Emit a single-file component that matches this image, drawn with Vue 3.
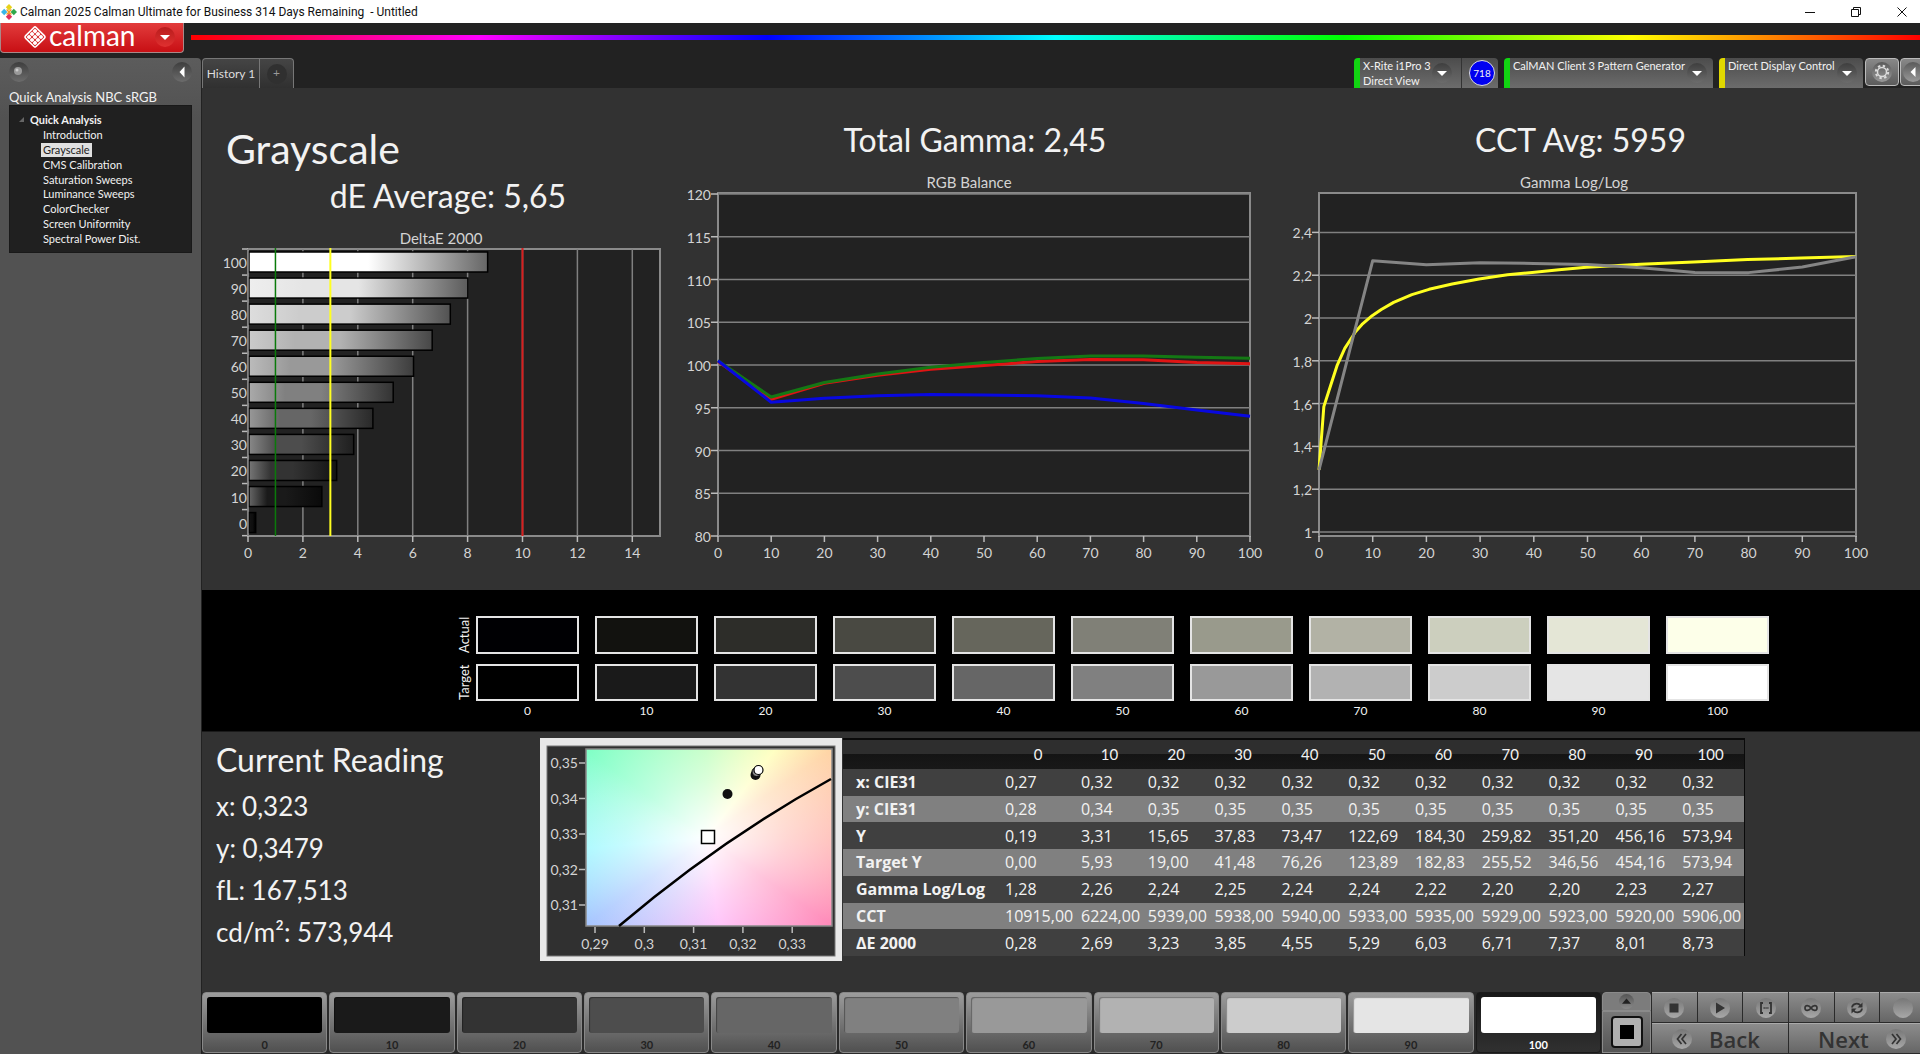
<script setup>
const treeItems = [
  'Introduction', 'Grayscale', 'CMS Calibration', 'Saturation Sweeps',
  'Luminance Sweeps', 'ColorChecker', 'Screen Uniformity', 'Spectral Power Dist.'
]

const levels = [
  { level: 0, gray: 0, actual: '#000003' },
  { level: 10, gray: 26, actual: '#12120f' },
  { level: 20, gray: 51, actual: '#2d2d29' },
  { level: 30, gray: 77, actual: '#494942' },
  { level: 40, gray: 102, actual: '#66665c' },
  { level: 50, gray: 128, actual: '#808077' },
  { level: 60, gray: 153, actual: '#999a8c' },
  { level: 70, gray: 178, actual: '#b2b2a5' },
  { level: 80, gray: 204, actual: '#cccfbe' },
  { level: 90, gray: 229, actual: '#e4e6d6' },
  { level: 100, gray: 255, actual: '#fdffe9' }
]
const rgb = (v) => `rgb(${Math.round(v)}, ${Math.round(v)}, ${Math.round(v)})`

const rows = [
  ['x: CIE31', '0,27', '0,32', '0,32', '0,32', '0,32', '0,32', '0,32', '0,32', '0,32', '0,32', '0,32'],
  ['y: CIE31', '0,28', '0,34', '0,35', '0,35', '0,35', '0,35', '0,35', '0,35', '0,35', '0,35', '0,35'],
  ['Y', '0,19', '3,31', '15,65', '37,83', '73,47', '122,69', '184,30', '259,82', '351,20', '456,16', '573,94'],
  ['Target Y', '0,00', '5,93', '19,00', '41,48', '76,26', '123,89', '182,83', '255,52', '346,56', '454,16', '573,94'],
  ['Gamma Log/Log', '1,28', '2,26', '2,24', '2,25', '2,24', '2,24', '2,22', '2,20', '2,20', '2,23', '2,27'],
  ['CCT', '10915,00', '6224,00', '5939,00', '5938,00', '5940,00', '5933,00', '5935,00', '5929,00', '5923,00', '5920,00', '5906,00'],
  ['ΔE 2000', '0,28', '2,69', '3,23', '3,85', '4,55', '5,29', '6,03', '6,71', '7,37', '8,01', '8,73']
]

/* DeltaE bar chart */
const deltas = [8.73, 8.01, 7.37, 6.71, 6.03, 5.29, 4.55, 3.85, 3.23, 2.69, 0.28]
const dx = (v) => 46 + v * 27.45
const dy = (i) => 35 + i * 26.06
const bars = deltas.map((v, i) => {
  const { level, gray } = levels[10 - i]
  return {
    level,
    width: v * 27.45,
    y: dy(i) + 3,
    start: rgb(level ? gray + (255 - gray) * 0.33 : 34),
    mid: rgb(level ? gray : 16),
    end: rgb(gray * 0.4)
  }
})

/* RGB balance line chart */
const rx = (v) => 38 + v * 5.32
const ry = (v) => 378 - (v - 80) * 8.55
const line = (vals, fx, fy) => vals.map((v, i) => `${fx(i * 10)},${fy(v)}`).join(' ')
const balance = [
  { name: 'red', points: line([100.4, 96, 97.85, 98.8, 99.5, 99.95, 100.4, 100.65, 100.6, 100.3, 100.15], rx, ry) },
  { name: 'green', points: line([100.5, 96.25, 97.95, 98.95, 99.75, 100.3, 100.75, 101.05, 101.05, 100.9, 100.8], rx, ry) },
  { name: 'blue', points: line([100.5, 95.65, 96.1, 96.4, 96.55, 96.5, 96.4, 96.15, 95.5, 94.75, 94], rx, ry) }
]

/* Gamma line chart */
const gx = (v) => 49 + v * 5.37
const gy = (v) => 374 - (v - 1) * 214
const gammaTicks = [2.4, 2.2, 2, 1.8, 1.6, 1.4, 1.2, 1]
const measured = line([1.29, 2.268, 2.249, 2.258, 2.255, 2.25, 2.235, 2.213, 2.212, 2.238, 2.286], gx, gy)
const target = [
  [0, 1.29], [0.9, 1.586], [2.3, 1.695], [3.4, 1.78], [4.8, 1.858], [6.3, 1.916], [6.8, 1.936],
  [8, 1.97], [9.9, 2.011], [11.6, 2.04], [13.9, 2.073], [17.3, 2.109], [20.5, 2.134], [24.8, 2.159],
  [29.8, 2.182], [35.1, 2.202], [39.7, 2.213], [44.7, 2.226], [49.8, 2.237], [59.9, 2.251],
  [69.8, 2.262], [79.8, 2.273], [89.8, 2.28], [100, 2.287]
].map(([x, y]) => `${gx(x)},${gy(y)}`).join(' ')

const comma = (v) => String(v).replace('.', ',')
const tens = levels.map((l) => l.level)
</script>

<template>
  <div class="app">
    <header class="titlebar">
      <svg class="app-icon" viewBox="0 0 16 16" aria-hidden="true">
        <path d="M8 0l3.2 3.2L8 6.4 4.8 3.2z" fill="#e8d21a" />
        <path d="M3.2 4.8L6.4 8l-3.2 3.2L0 8z" fill="#38b6e8" />
        <path d="M12.8 4.8L16 8l-3.2 3.2L9.6 8z" fill="#2fa84a" />
        <path d="M8 9.6l3.2 3.2L8 16l-3.2-3.2z" fill="#e0305a" />
        <path d="M5.600 5.600l2.400 2.400-2.400 2.400M10.400 5.600L8 8l2.400 2.400" fill="none" stroke="#f29a2c" stroke-width="1.400" />
      </svg>
      <span class="app-title">Calman 2025 Calman Ultimate for Business 314 Days Remaining&nbsp; - Untitled</span>
      <div class="window-buttons">
        <button aria-label="Minimize"><svg viewBox="0 0 12 12"><path d="M1 6.500h10" /></svg></button>
        <button aria-label="Restore"><svg viewBox="0 0 12 12"><path d="M1.500 3.500h7v7h-7zM3.500 3.500v-2h7v7h-2" /></svg></button>
        <button aria-label="Close"><svg viewBox="0 0 12 12"><path d="M1.500 1.500l9 9M10.500 1.500l-9 9" /></svg></button>
      </div>
    </header>

    <div class="brandbar">
      <button class="brand">
        <svg class="brand-mark" viewBox="0 0 24 24" aria-hidden="true">
          <g transform="rotate(45 12 12)">
            <rect x="4.500" y="4.500" width="15" height="15" rx="1.500" fill="none" stroke="#fff" stroke-width="1.600" />
            <template v-for="r in 3" :key="r">
              <rect v-for="c in 3" :key="c" :x="1.800 + c * 4.200" :y="1.800 + r * 4.200" width="3.600" height="3.600" rx="1" fill="#fff" />
            </template>
          </g>
        </svg>
        <span class="brand-name">calman</span>
        <span class="knob red"><svg viewBox="0 0 20 20"><path d="M5 8h10l-5 5z" fill="#fff" /></svg></span>
      </button>
      <div class="rainbow"></div>
    </div>

    <div class="body">
      <aside class="sidebar">
        <div class="side-top">
          <button class="knob" aria-label="Options"><svg viewBox="0 0 20 20"><circle cx="9" cy="9" r="4" fill="#999" /><circle cx="8" cy="8" r="1.500" fill="#ccc" /></svg></button>
          <button class="knob" aria-label="Collapse"><svg viewBox="0 0 20 20"><path d="M12.500 4.500v11L7.500 10z" fill="#fff" /></svg></button>
        </div>
        <h2 class="workflow">Quick Analysis NBC sRGB</h2>
        <nav class="tree">
          <div class="tree-root">
            <svg viewBox="0 0 8 8"><path d="M6 2v5H1z" fill="#666" /></svg>
            <span>Quick Analysis</span>
          </div>
          <ul>
            <li v-for="item in treeItems" :key="item">
              <a href="#" :class="{ selected: item === 'Grayscale' }">{{ item }}</a>
            </li>
          </ul>
        </nav>
      </aside>

      <main class="workspace">
        <div class="toolbar">
          <div class="tabs">
            <button class="tab">History 1</button>
            <button class="tab add" aria-label="Add history"><span>+</span></button>
          </div>
          <div class="devices">
            <div class="device meter">
              <button class="device-main">
                <span class="device-text">X-Rite i1Pro 3<br>Direct View</span>
                <span class="knob"><svg viewBox="0 0 20 20"><path d="M5 8h10l-5 5z" fill="#fff" /></svg></span>
              </button>
              <span class="badge-cell"><span class="badge">718</span></span>
            </div>
            <div class="device pattern">
              <button class="device-main">
                <span class="device-text">CalMAN Client 3 Pattern Generator</span>
                <span class="knob"><svg viewBox="0 0 20 20"><path d="M5 8h10l-5 5z" fill="#fff" /></svg></span>
              </button>
            </div>
            <div class="device display">
              <button class="device-main">
                <span class="device-text">Direct Display Control</span>
                <span class="knob"><svg viewBox="0 0 20 20"><path d="M5 8h10l-5 5z" fill="#fff" /></svg></span>
              </button>
            </div>
            <button class="square" aria-label="Settings">
              <span class="knob light"><svg viewBox="0 0 20 20"><circle cx="10" cy="10" r="4.500" fill="none" stroke="#ddd" stroke-width="1.500" /><circle cx="10" cy="10" r="6.200" fill="none" stroke="#ddd" stroke-width="2" stroke-dasharray="2.400 2.470" /></svg></span>
            </button>
            <button class="square" aria-label="Collapse toolbar">
              <span class="knob light"><svg viewBox="0 0 20 20"><path d="M12.500 5v10l-5-5z" fill="#fff" /></svg></span>
            </button>
          </div>
        </div>

        <section class="charts">
          <div class="col delta-col">
            <h1>Grayscale</h1>
            <h2>dE Average: 5,65</h2>
            <svg class="chart" viewBox="0 0 478 376">
              <defs>
                <linearGradient v-for="b in bars" :id="'bar' + b.level" :key="b.level">
                  <stop offset="0" :stop-color="b.start" />
                  <stop offset="0.250" :stop-color="b.mid" />
                  <stop offset="0.500" :stop-color="b.mid" />
                  <stop offset="1" :stop-color="b.end" />
                </linearGradient>
              </defs>
              <text class="caption" x="239" y="30" text-anchor="middle">DeltaE 2000</text>
              <rect class="plot" x="46" y="35" width="412" height="287" />
              <g v-for="v in [0, 2, 4, 6, 8, 10, 12, 14]" :key="v">
                <line class="grid" :x1="dx(v)" :x2="dx(v)" y1="35" y2="322" />
                <line class="tick" :x1="dx(v)" :x2="dx(v)" y1="322" y2="328" />
                <text class="label" :x="dx(v)" y="344" text-anchor="middle">{{ v }}</text>
              </g>
              <line v-for="i in 12" :key="i" class="tick" x1="40" x2="46" :y1="dy(i - 1)" :y2="dy(i - 1)" />
              <g v-for="b in bars" :key="b.level">
                <rect x="47" :y="b.y" :width="b.width - 1" height="20" :fill="`url(#bar${b.level})`" stroke="#000" stroke-width="1.500" />
                <text class="label" x="45" :y="b.y + 16" text-anchor="end">{{ b.level }}</text>
              </g>
              <line class="grid" x1="46" x2="46" y1="35" y2="322" />
              <line :x1="dx(1)" :x2="dx(1)" y1="34" y2="322" stroke="#0a7a0a" stroke-width="1.500" />
              <line :x1="dx(3)" :x2="dx(3)" y1="34" y2="322" stroke="#ffff20" stroke-width="2" />
              <line :x1="dx(10)" :x2="dx(10)" y1="34" y2="322" stroke="#d81e1e" stroke-width="2" />
            </svg>
          </div>

          <div class="col">
            <h2>Total Gamma: 2,45</h2>
            <svg class="chart" viewBox="0 0 590 432">
              <text class="caption" x="289" y="30" text-anchor="middle">RGB Balance</text>
              <rect class="plot" x="38" y="35" width="532" height="343" />
              <g v-for="v in [80, 85, 90, 95, 100, 105, 110, 115, 120]" :key="v">
                <line class="grid" x1="38" x2="570" :y1="ry(v)" :y2="ry(v)" />
                <line class="tick" x1="31" x2="38" :y1="ry(v)" :y2="ry(v)" />
                <text class="label" x="31" :y="ry(v) + 6" text-anchor="end">{{ v }}</text>
              </g>
              <g v-for="v in tens" :key="'x' + v">
                <line class="tick" :x1="rx(v)" :x2="rx(v)" y1="378" y2="384" />
                <text class="label" :x="rx(v)" y="400" text-anchor="middle">{{ v }}</text>
              </g>
              <polyline v-for="s in balance" :key="s.name" :class="['series', s.name]" :points="s.points" />
            </svg>
          </div>

          <div class="col gamma-col">
            <h2>CCT Avg: 5959</h2>
            <svg class="chart" viewBox="0 0 650 432">
              <text class="caption" x="304" y="30" text-anchor="middle">Gamma Log/Log</text>
              <rect class="plot" x="49" y="35" width="537" height="343" />
              <g v-for="v in gammaTicks" :key="v">
                <line class="grid" x1="49" x2="586" :y1="gy(v)" :y2="gy(v)" />
                <line class="tick" x1="42" x2="49" :y1="gy(v)" :y2="gy(v)" />
                <text class="label" x="42" :y="gy(v) + 6" text-anchor="end">{{ comma(v) }}</text>
              </g>
              <g v-for="v in tens" :key="'x' + v">
                <line class="tick" :x1="gx(v)" :x2="gx(v)" y1="378" y2="384" />
                <text class="label" :x="gx(v)" y="400" text-anchor="middle">{{ v }}</text>
              </g>
              <polyline class="series yellow" :points="target" />
              <polyline class="series gray" :points="measured" />
            </svg>
          </div>
        </section>

        <section class="swatches">
          <span class="side-label">Actual</span>
          <div v-for="l in levels" :key="'a' + l.level" class="swatch" :style="{ background: l.actual }"></div>
          <span class="side-label">Target</span>
          <div v-for="l in levels" :key="'t' + l.level" class="swatch" :style="{ background: rgb(l.gray) }"></div>
          <span></span>
          <span v-for="l in levels" :key="'n' + l.level" class="swatch-label">{{ l.level }}</span>
        </section>

        <section class="readings">
          <div class="current">
            <h2>Current Reading</h2>
            <p>x: 0,323</p>
            <p>y: 0,3479</p>
            <p>fL: 167,513</p>
            <p>cd/m²: 573,944</p>
          </div>
          <svg class="cie" viewBox="0 0 302 223">
            <rect width="302" height="223" fill="#e8e8e8" />
            <rect x="7" y="8" width="288" height="210" fill="#303030" stroke="#777" />
            <foreignObject x="46" y="11" width="246" height="177"><div class="gamut"></div></foreignObject>
            <rect x="46" y="11" width="246" height="177" fill="none" stroke="#888" stroke-width="1.500" />
            <g v-for="(t, i) in ['0,35', '0,34', '0,33', '0,32', '0,31']" :key="t">
              <line class="tick" x1="39" x2="45" :y1="25 + i * 35.500" :y2="25 + i * 35.500" />
              <text class="label" x="38" :y="30 + i * 35.500" text-anchor="end">{{ t }}</text>
            </g>
            <g v-for="(t, i) in ['0,29', '0,3', '0,31', '0,32', '0,33']" :key="'x' + t">
              <line class="tick" :x1="55 + i * 49.300" :x2="55 + i * 49.300" y1="189" y2="195" />
              <text class="label" :x="55 + i * 49.300" y="211" text-anchor="middle">{{ t }}</text>
            </g>
            <path d="M79 188Q180 102 291 41" fill="none" stroke="#000" stroke-width="2.500" />
            <rect x="161.500" y="92.500" width="13" height="13" fill="#fff" stroke="#000" stroke-width="1.500" />
            <circle cx="187.500" cy="56" r="5" fill="#111" />
            <circle cx="215.500" cy="37" r="5" fill="#111" />
            <circle cx="216.500" cy="34" r="4.500" fill="#888" stroke="#000" />
            <circle cx="218.500" cy="32" r="4.500" fill="#fff" stroke="#000" stroke-width="1.200" />
          </svg>
          <table class="data">
            <colgroup>
              <col class="c-name"><col class="c-zero"><col v-for="n in 10" :key="n">
            </colgroup>
            <thead>
              <tr>
                <td></td>
                <th v-for="v in tens" :key="v" scope="col">{{ v }}</th>
              </tr>
            </thead>
            <tbody>
              <tr v-for="r in rows" :key="r[0]">
                <th scope="row">{{ r[0] }}</th>
                <td v-for="(c, i) in r.slice(1)" :key="i">{{ c }}</td>
              </tr>
            </tbody>
          </table>
        </section>

        <footer class="bottombar">
          <div class="patches">
            <button v-for="l in levels" :key="l.level" class="patch" :class="{ active: l.level === 100 }">
              <span class="patch-color" :style="{ background: rgb(l.gray) }"></span>
              <span class="patch-label">{{ l.level }}</span>
            </button>
          </div>
          <div class="window-ctl">
            <button class="up" aria-label="Expand"><span class="knob dim"><svg viewBox="0 0 20 20"><path d="M4 13h12l-6-7z" fill="#222" /></svg></span></button>
            <button class="full" aria-label="Pattern window"><span></span></button>
          </div>
          <div class="transport">
            <div class="row">
              <button aria-label="Stop"><span class="knob pale"><svg viewBox="0 0 20 20"><path d="M5.500 5.500h9v9h-9z" fill="#333" /></svg></span></button>
              <button aria-label="Play"><span class="knob pale"><svg viewBox="0 0 20 20"><path d="M6 4.500v11l9-5.500z" fill="#333" /></svg></span></button>
              <button aria-label="Range"><span class="knob pale"><svg viewBox="0 0 20 20"><path d="M7 5H5v10h2M13 5h2v10h-2" fill="none" stroke="#333" stroke-width="1.800" /><path d="M7.500 10h5" stroke="#333" stroke-width="1.500" stroke-dasharray="1.300 0.600" /></svg></span></button>
              <button aria-label="Continuous"><span class="knob pale"><svg viewBox="0 0 20 20"><path d="M10 10C8 7.200 4 6.500 4 10s4 2.800 6 0 6-3.500 6 0-4 2.800-6 0z" fill="none" stroke="#333" stroke-width="1.700" /></svg></span></button>
              <button aria-label="Refresh"><span class="knob pale"><svg viewBox="0 0 20 20"><path d="M5 9.500C5.500 5.500 11 4.200 13.500 7.500M15 10.500c-.5 4-6 5.300-8.500 2" fill="none" stroke="#333" stroke-width="1.800" /><path d="M15.500 4.500v5h-5zM4.500 15.500v-5h5z" fill="#333" /></svg></span></button>
              <button aria-label="Record"><span class="knob pale"></span></button>
            </div>
            <div class="row steps">
              <button class="back"><span class="knob pale"><svg viewBox="0 0 20 20"><path d="M9.500 5l-4 5 4 5M14 5l-4 5 4 5" fill="none" stroke="#333" stroke-width="1.700" /></svg></span>Back</button>
              <button class="next">Next<span class="knob pale"><svg viewBox="0 0 20 20"><path d="M6 5l4 5-4 5M10.500 5l4 5-4 5" fill="none" stroke="#333" stroke-width="1.700" /></svg></span></button>
            </div>
          </div>
        </footer>
      </main>
    </div>
  </div>
</template>

<style>
body { margin: 0; background: #222; }
</style>

<style scoped>
* { box-sizing: border-box; }
h1, h2, p, ul { margin: 0; padding: 0; font-weight: 400; }
ul { list-style: none; }
button { margin: 0; padding: 0; border: 0; background: none; color: inherit; font: inherit; }

.app {
  display: flex;
  flex-direction: column;
  min-height: 100vh;
  overflow: hidden;
  background: #222;
  color: #f2f2f2;
  font-family: Lato, "Liberation Sans", sans-serif;
}

.titlebar {
  display: flex;
  align-items: center;
  height: 23px;
  padding-left: 1px;
  overflow: hidden;
  background: #fff;
  color: #111;
  font-family: Roboto, "Open Sans", sans-serif;
  font-size: 12px;
}
.app-icon { width: 16px; height: 16px; margin-right: 3px; }
.app-title { flex: 1; white-space: nowrap; }
.window-buttons { display: flex; margin-right: -5px; }
.window-buttons button { width: 46px; height: 23px; line-height: 0; }
.window-buttons svg { width: 12px; height: 12px; fill: none; stroke: #111; stroke-width: 1; }

.brandbar { display: flex; height: 35px; gap: 7px; }
.brand {
  display: flex;
  align-items: center;
  width: 184px;
  height: 30px;
  padding: 0 0 2px 22px;
  border: 1px solid #a88;
  border-top: 0;
  border-radius: 0 0 4px 4px;
  background: linear-gradient(#e23c3c, #c80f14);
  color: #fff;
}
.brand-mark { width: 24px; height: 24px; }
.brand-name { width: 108px; padding: 0 0 3px 2px; font-size: 28px; line-height: 26px; text-align: left; }
.rainbow {
  flex: 1;
  height: 5px;
  margin-top: 12px;
  background: linear-gradient(90deg, #f00, #f0f, #00f, #0ff, #0f0, #ff0, #f00);
}

.knob {
  display: block;
  flex: none;
  width: 20px;
  height: 20px;
  border-radius: 50%;
  background: linear-gradient(#3e3e3e, #6c6c6c);
  line-height: 0;
}
.knob svg { width: 100%; height: 100%; }
.knob.red { background: linear-gradient(#b81c1c, #e03030); }
.knob.light { background: linear-gradient(#5a5a5a, #999); }
.knob.dim { width: 15px; height: 15px; background: linear-gradient(#555, #8a8a8a); }
.knob.pale { background: linear-gradient(#777, #a8a8a8); }

.body { display: flex; flex: 1; }
.sidebar {
  width: 201px;
  padding: 0 9px;
  border-radius: 0 4px 0 0;
  background: linear-gradient(#5c5c5c, #525252 60px);
}
.side-top { display: flex; justify-content: space-between; padding-top: 4px; }
.workflow { margin-top: 7px; font-size: 13px; line-height: 16px; white-space: nowrap; }
.tree { height: 148px; padding: 5px 8px; background: #202020; border: 1px solid #191919; }
.tree-root { display: flex; align-items: center; height: 16px; font-size: 11px; font-weight: 700; }
.tree-root svg { width: 8px; height: 8px; margin-right: 4px; }
.tree ul { display: grid; grid-auto-rows: 1fr; height: 118px; margin-top: 1px; padding-left: 23px; }
.tree li { display: flex; align-items: center; min-height: 0; }
.tree a {
  padding: 0 2px;
  color: #f2f2f2;
  font-size: 11px;
  line-height: 14px;
  text-decoration: none;
  white-space: nowrap;
}
.tree a.selected { background: #e0e0e0; color: #222; }

.workspace { display: flex; flex: 1; flex-direction: column; min-width: 0; border-left: 1px solid #222; background: #323232; }
.toolbar { display: flex; justify-content: space-between; height: 30px; background: #222; }
.tabs { display: flex; }
.tab {
  width: 58px;
  border: 1px solid #777;
  border-bottom: 0;
  border-radius: 4px 0 0 0;
  background: linear-gradient(#454545, #303030);
  color: #ddd;
  font-size: 12px;
}
.tab.add { width: 34px; border-left: 0; border-radius: 0 4px 0 0; }
.tab.add span { display: block; width: 20px; height: 20px; margin: 0 auto; border-radius: 50%; background: #303030; color: #999; line-height: 18px; }
.devices { display: flex; }
.device {
  display: flex;
  margin-right: 6px;
  border-left: 6px solid #12d412;
  border-radius: 4px 4px 0 0;
  background: linear-gradient(#4c4c4c, #6c6c6c);
  font-size: 11px;
  line-height: 15px;
}
.device.meter { width: 144px; }
.device.pattern { width: 209px; }
.device.display { width: 144px; margin-right: 2px; border-left-color: #e0d800; }
.device-main { display: flex; flex: 1; justify-content: space-between; padding: 0 6px 0 3px; text-align: left; white-space: nowrap; }
.device.meter .device-main { padding-right: 9px; }
.device .knob { margin-top: 5px; }
.badge-cell { width: 37px; padding: 2px 0 0 7px; border-left: 1px solid #333; }
.badge { display: block; width: 26px; height: 26px; border: 1px solid #ddd; border-radius: 50%; background: #0000f0; font-size: 10px; line-height: 24px; text-align: center; }
.square {
  display: flex;
  align-items: center;
  justify-content: center;
  flex: none;
  width: 34px;
  height: 28px;
  margin-right: 1px;
  border: 1px solid #bbb;
  border-radius: 4px;
  background: linear-gradient(#888, #5c5c5c);
}
.square:last-child { margin-right: -14px; padding-right: 8px; }

.charts { display: grid; grid-template-columns: 478fr 590fr 650fr; }
.col { padding-top: 33px; }
.col h2 { font-size: 32px; line-height: 37px; text-align: center; }
.delta-col { padding-top: 37px; }
.delta-col h1 { padding-left: 24px; font-size: 41px; line-height: 48px; }
.delta-col h2 { margin-top: 4px; padding-left: 14px; }
.gamma-col h2 { padding-right: 29px; }
.chart { display: block; width: 100%; }
.caption { fill: #d4d4d4; font-size: 15px; }
.label { fill: #d4d4d4; font-size: 14px; }
.plot { fill: #222; stroke: #8a8a8a; stroke-width: 2; }
.grid { stroke: #808080; stroke-width: 1.5; }
.tick { stroke: #bbb; stroke-width: 1.5; }
.series { fill: none; stroke-width: 3; stroke-linejoin: round; }
.series.red { stroke: #e01414; }
.series.green { stroke: #147814; }
.series.blue { stroke: #0808e0; }
.series.yellow { stroke: #ffff20; }
.series.gray { stroke: #858585; }

.swatches {
  display: grid;
  grid-template-columns: 24px repeat(11, 1fr);
  grid-template-rows: 38px 37px 20px;
  column-gap: 16px;
  row-gap: 10px;
  height: 141px;
  padding: 26px 151px 0 234px;
  background: #000;
}
.side-label { justify-self: end; width: 16px; writing-mode: vertical-rl; transform: rotate(180deg); font-size: 13px; line-height: 16px; text-align: center; margin-right: -12px; }
.swatch { border: 2px solid #e4e4e4; }
.swatch-label { margin-top: -8px; font-size: 12px; line-height: 16px; text-align: center; }

.readings { display: flex; flex: 1; align-items: flex-start; padding: 6px 175px 0 14px; border-top: 1px solid #1a1a1a; }
.current { width: 324px; white-space: nowrap; }
.current h2 { padding: 3px 0 6px; font-size: 32px; line-height: 38px; }
.current p { font-size: 26px; line-height: 42px; }
.cie { display: block; width: 302px; flex: none; }
.gamut {
  height: 177px;
  background:
    radial-gradient(farthest-corner at 49% 50%, #fff, rgba(255, 255, 255, 0.500) 45%, rgba(255, 255, 255, 0)),
    conic-gradient(from 0deg at 49% 50%, #b8ffb8 0deg, #ffffb4 38deg, #ffd4a4 55deg, #ffb0a8 90deg, #ff88b8 125deg, #ffb0f8 172deg, #a4c4ff 234deg, #90f8ff 265deg, #7cffc4 306deg, #b8ffb8 360deg);
}

.data {
  flex: 1;
  height: 218px;
  margin-left: 1px;
  border-collapse: collapse;
  border-top: 2px solid #0a0a0a;
  border-right: 1px solid #0a0a0a;
  table-layout: fixed;
  font-family: "Open Sans", "Noto Sans", sans-serif;
  font-size: 16px;
  line-height: 20px;
  white-space: nowrap;
}
.data th, .data td { padding: 0; }
.c-name { width: 157px; }
.c-zero { width: 76px; }
.data thead tr { height: 30px; background: linear-gradient(#2e2e2e 50%, #141414 50%, #181818); }
.data thead th { padding-bottom: 2px; font-family: Lato, sans-serif; font-size: 15px; font-weight: 400; }
.data tbody tr { background: #404040; }
.data tbody tr:nth-child(even) { background: #808080; }
.data tbody th { padding-left: 13px; font-weight: 700; text-align: left; }
.data tbody td { padding-left: 5px; }

.bottombar { display: flex; height: 62px; background: #2a2a2a; }
.patches { display: flex; flex: 1; gap: 2px; }
.patch {
  display: flex;
  flex: 1;
  flex-direction: column;
  height: 61px;
  padding: 4px 4px 0;
  border: 1px solid #888;
  border-radius: 4px;
  background: linear-gradient(#9c9c9c, #6e6e6e 60%, #505050);
  color: #222;
}
.patch-color { flex: none; width: 100%; height: 36px; border-radius: 3px; box-shadow: inset 1px 1px 1px rgba(0, 0, 0, 0.350); }
.patch-label { width: 100%; padding-top: 5px; font-size: 11px; font-weight: 700; line-height: 14px; text-align: center; }
.patch.active { border-color: #1a1a1a; background: linear-gradient(#181818, #303030); color: #fff; }
.patch.active .patch-color { box-shadow: none; }

.window-ctl { display: flex; flex-direction: column; width: 49px; margin: 0 1px; }
.window-ctl button { display: flex; align-items: center; justify-content: center; border: 1px solid #8a8a8a; }
.up { height: 19px; border-radius: 4px 4px 0 0; background: #7c7c7c; }
.full { height: 42px; background: linear-gradient(#777, #555); }
.full span { width: 30px; height: 30px; border: 8px solid #b0b0b0; border-radius: 3px; outline: 2px solid #111; outline-offset: -1px; background: #000; }

.transport { width: 268px; overflow: hidden; }
.transport .row { display: flex; width: 273px; height: 31px; gap: 1px; }
.transport button {
  display: flex;
  align-items: center;
  justify-content: center;
  flex: 1;
  height: 30px;
  border-top: 1px solid #aaa;
  background: linear-gradient(#8c8c8c, #666);
}
.transport .steps button { justify-content: flex-start; gap: 17px; color: #333; font-family: "Open Sans", "Noto Sans", sans-serif; font-size: 22px; font-weight: 600; line-height: 28px; }
.transport .steps .back { flex: none; width: 136px; padding-left: 20px; }
.transport .steps .next { padding-left: 29px; }
</style>
